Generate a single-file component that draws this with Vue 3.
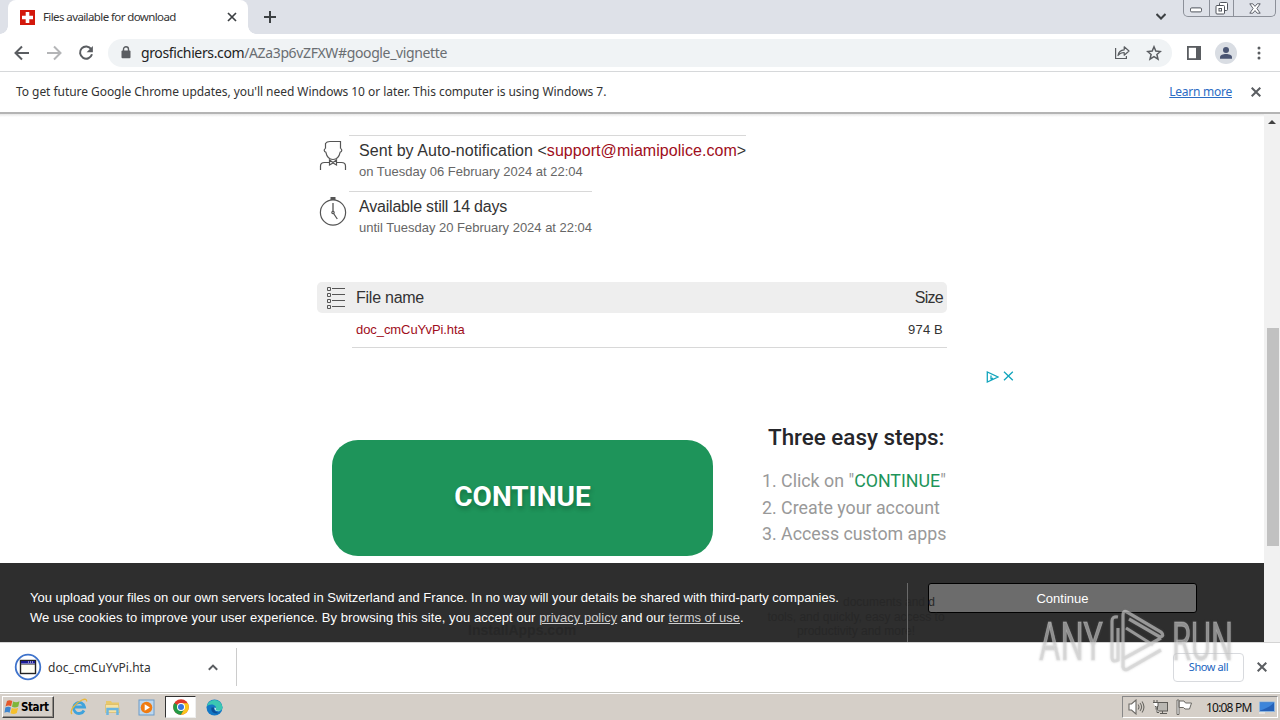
<template>
  <div class="screen">
    <header class="tabstrip">
      <div class="tab">
        <svg class="favicon" width="15" height="15" viewBox="0 0 15 15">
          <rect width="15" height="15" fill="#d3180c" />
          <path d="M7.5 2v11M2 7.5h11" stroke="#fff" stroke-width="3.600" />
        </svg>
        <span class="tab-title">Files available for download</span>
        <svg width="10" height="10" viewBox="0 0 10 10" class="stroke dark thin">
          <path d="M1 1l8 8M9 1l-8 8" />
        </svg>
      </div>
      <svg class="new-tab stroke dark" width="12" height="12" viewBox="0 0 12 12">
        <path d="M6 0v12M0 6h12" />
      </svg>
      <svg class="tab-search stroke dark" width="10" height="7" viewBox="0 0 10 7">
        <path d="M.5 1L5 5.500 9.500 1" />
      </svg>
      <div class="window-controls">
        <span class="wc minimize">
          <svg width="12" height="6" viewBox="0 0 12 6"><rect x="0.5" y="0.9" width="11" height="4" rx="1.2" fill="#fff" stroke="#50545c" /></svg>
        </span>
        <span class="wc restore">
          <svg width="14" height="13" viewBox="0 0 14 13" fill="#fff" stroke="#50545c">
            <rect x="4.5" y="0.5" width="8" height="8" rx="1" />
            <rect x="1" y="3.5" width="8.5" height="8.5" rx="1" />
            <rect x="4" y="6.5" width="2.5" height="2.5" />
          </svg>
        </span>
        <span class="wc quit">
          <svg width="12" height="11" viewBox="0 0 12 11">
            <path d="M.8.8h3L6 3.4 8.200.8h3L7.900 5.500l3.300 4.700h-3L6 7.600l-2.200 2.600h-3l3.300-4.700z" fill="#fff" stroke="#50545c" stroke-width="0.9" />
          </svg>
        </span>
      </div>
    </header>

    <div class="toolbar">
      <svg class="stroke nav" width="16" height="16" viewBox="0 0 16 16"><path d="M15 8H2M8 1.500L1.500 8 8 14.500" /></svg>
      <svg class="stroke nav faded" width="16" height="16" viewBox="0 0 16 16"><path d="M1 8h13M8 1.500L14.500 8 8 14.500" /></svg>
      <svg class="nav" width="16" height="16" viewBox="0 0 16 16">
        <path d="M13.200 4.100A6.100 6.100 0 1 0 14 9.300" fill="none" stroke="#5a5d61" stroke-width="2" />
        <path d="M14.900 1v6.300H8.600z" fill="#5a5d61" />
      </svg>
      <div class="omnibox">
        <svg class="lock" width="10" height="13" viewBox="0 0 10 13">
          <rect x="0.500" y="4.500" width="9" height="7.800" rx="1" fill="#5a5d61" />
          <path d="M2.500 5V3.200a2.500 2.500 0 0 1 5 0V5" fill="none" stroke="#5a5d61" stroke-width="1.400" />
        </svg>
        <span class="url"><span class="domain">grosfichiers.com</span>/AZa3p6vZFXW#google_vignette</span>
        <svg class="share" width="16" height="15" viewBox="0 0 16 15" fill="none" stroke="#5a5d61" stroke-width="1.200">
          <path d="M1.600 3v10.500h10.800v-2.500" />
          <path d="M4 10.500c.6-3.800 2.800-5.500 6.200-5.700V1.800L15 6l-4.800 4.200V7.500C7.500 7.500 5.600 8.300 4 10.500z" stroke-linejoin="round" />
        </svg>
        <svg class="star" width="16" height="16" viewBox="0 0 16 16">
          <path d="M8 1.800l1.800 4.300 4.600.4-3.500 3 1.100 4.600L8 11.700l-4 2.400 1.100-4.600-3.500-3 4.600-.4z" fill="none" stroke="#5a5d61" stroke-width="1.500" />
        </svg>
      </div>
      <svg class="side-panel" width="14" height="14" viewBox="0 0 14 14">
        <rect x="0.900" y="0.900" width="12.200" height="12.200" fill="#fff" stroke="#5a5d61" stroke-width="1.800" />
        <path d="M9 0h5v14H9z" fill="#5a5d61" />
      </svg>
      <svg class="avatar" width="22" height="22" viewBox="0 0 22 22">
        <circle cx="11" cy="11" r="11" fill="#d9dde3" />
        <circle cx="11" cy="8" r="3" fill="#4a5573" />
        <path d="M5 16.800v-1.600c0-2 3-3.200 6-3.200s6 1.200 6 3.200v1.600z" fill="#4a5573" />
      </svg>
      <svg class="kebab" width="4" height="14" viewBox="0 0 4 14" fill="#5a5d61">
        <circle cx="2" cy="2" r="1.500" /><circle cx="2" cy="7" r="1.500" /><circle cx="2" cy="12" r="1.500" />
      </svg>
    </div>

    <div class="infobar">
      <span class="info-text">To get future Google Chrome updates, you'll need Windows 10 or later. This computer is using Windows 7.</span>
      <a class="learn">Learn more</a>
      <svg class="stroke" width="10" height="10" viewBox="0 0 10 10"><path d="M.7.7l8.600 8.600M9.300.7L.7 9.300" /></svg>
    </div>

    <main class="viewport">
      <div class="page">
        <div class="content">
          <section class="detail">
            <svg class="detail-icon" width="28" height="31" viewBox="0 0 28 31" fill="none" stroke="#555" stroke-width="1.200">
              <path d="M6.500 8.500V3.500C7.500 1.800 9 1.500 11 1.500h10.500v7M6.500 8.500c-2 .5-1.500 3.500.3 3.700C7.700 16.500 10.500 19.500 14 19.500s6.300-3 7.200-7.300c1.800-.2 2.300-3.200.3-3.700" />
              <path d="M10.500 20v5l3.500-2 3.500 2v-5L14 22.500zM1.500 30v-4c0-2.500 1.500-3.500 4-3.500h5M26.500 30v-4c0-2.500-1.500-3.500-4-3.500h-5" />
            </svg>
            <div class="detail-body">
              <p class="title sender">Sent by Auto-notification &lt;<a>support@miamipolice.com</a>&gt;</p>
              <p class="sub">on Tuesday 06 February 2024 at 22:04</p>
            </div>
          </section>
          <section class="detail">
            <svg class="detail-icon" width="28" height="31" viewBox="0 0 28 31" fill="none" stroke="#555" stroke-width="1.200">
              <circle cx="14" cy="16.500" r="12.600" />
              <circle cx="14" cy="16.500" r="1.200" />
              <path d="M14 7v8.300M14.600 17.500l3.700 5.500" stroke-width="1.300" />
              <path d="M11.500 2.500h5" stroke-width="3" />
            </svg>
            <div class="detail-body">
              <p class="title days">Available still 14 days</p>
              <p class="sub">until Tuesday 20 February 2024 at 22:04</p>
            </div>
          </section>

          <div class="files">
            <div class="files-head">
              <svg width="18" height="23" viewBox="0 0 18 23" fill="none" stroke="#555">
                <path v-for="y in rows" :key="y" :d="`M.5 ${y}h3v3h-3zM5 ${y + 1}h13`" />
              </svg>
              <span class="name">File name</span>
              <span class="size">Size</span>
            </div>
            <div class="files-row">
              <a class="file-link">doc_cmCuYvPi.hta</a>
              <span class="file-size">974 B</span>
            </div>
          </div>
        </div>

        <div class="ad">
          <div class="ad-choices">
            <svg width="13" height="12" viewBox="0 0 13 12" fill="none" stroke="#12a5bd" stroke-width="1.300">
              <path d="M1.300 1v10L12 6zM5 4.500v4M5 8l2-1" />
            </svg>
            <svg width="11" height="10" viewBox="0 0 11 10" stroke="#12a5bd" stroke-width="1.300"><path d="M1 .7l8.800 8.600M9.800.7L1 9.300" /></svg>
          </div>
          <div class="ad-body">
            <div class="ad-button"><span>CONTINUE</span></div>
            <div class="steps">
              <h3>Three easy steps:</h3>
              <p>1. Click on "<b>CONTINUE</b>"</p>
              <p>2. Create your account</p>
              <p>3. Access custom apps</p>
            </div>
          </div>
        </div>

        <div class="cookies">
          <span class="ghost brand">InstallApps.com</span>
          <span class="ghost blurb"><i>documents and d</i><br />tools, and quickly, easy access to<br />productivity and more!</span>
          <div class="cookie-text">
            <p>You upload your files on our own servers located in Switzerland and France. In no way will your details be shared with third-party companies.</p>
            <p><span class="consent">We use cookies to improve your user experience. By browsing this site, you accept our </span><u>privacy policy</u> and our <u>terms of use</u>.</p>
          </div>
          <div class="cookie-action">
            <button>Continue</button>
          </div>
        </div>
      </div>
      <div class="scrollbar">
        <svg width="8" height="4" viewBox="0 0 8 4"><path d="M4 0l4 4H0z" fill="#404040" /></svg>
        <div class="thumb"></div>
      </div>
    </main>

    <div class="downloads">
      <svg class="file-icon" width="28" height="28" viewBox="0 0 28 28">
        <circle cx="14" cy="14" r="12.300" fill="#fff" stroke="#3f73cb" stroke-width="1.800" />
        <rect x="6.500" y="7.500" width="15" height="13" fill="#fffef5" stroke="#222" stroke-width="1.400" />
        <path d="M7 9.300h14" stroke="#1c1c96" stroke-width="2.600" />
        <path d="M14 9h6" stroke="#fff" stroke-dasharray="1 1" />
        <path d="M7 11.500h14" stroke="#555" stroke-width="0.700" />
      </svg>
      <span class="dl-name">doc_cmCuYvPi.hta</span>
      <svg class="stroke" width="10" height="7" viewBox="0 0 10 7"><path d="M.8 5.800L5 1.600l4.200 4.200" /></svg>
      <div class="dl-sep"></div>
      <button class="show-all">Show all</button>
      <svg class="stroke dl-close" width="10" height="10" viewBox="0 0 10 10"><path d="M.7.7l8.600 8.600M9.300.7L.7 9.300" /></svg>
    </div>

    <footer class="taskbar">
      <div class="start">
        <svg width="17" height="16" viewBox="0 0 16 16">
          <path d="M2.500 2C4 .8 6 .9 7.800 2L6.600 7.300C5 6.300 3 6.300 1 7.400z" fill="#e5592b" />
          <path d="M8.600 2.500c2 1 4.200 1 6.400-.3L13.800 7.500c-2 1.100-4.400 1.200-6.300.2z" fill="#7eb63a" />
          <path d="M.8 8.500c2-1.100 4-1.100 5.600-.1l-1.300 5.400c-1.500-1-3.500-1-5.100 0z" fill="#3f86cf" />
          <path d="M7.300 8.900c2 1 4.300.8 6.300-.2l-1.300 5.300c-2 1.200-4.200 1.300-6.300.2z" fill="#f6c02c" />
        </svg>
        <span>Start</span>
      </div>
      <span class="task ie">
        <svg width="18" height="18" viewBox="0 0 18 18" fill="none">
          <path d="M14 12.500A5.500 5.500 0 1 1 14.500 9H5" stroke="#3fa3dc" stroke-width="2.800" />
          <path d="M2 16C-1 13 5 5 12 2c3-1.300 5-1 4.500 1.500" stroke="#e9b73a" stroke-width="1.300" />
        </svg>
      </span>
      <span class="task folder">
        <svg width="17" height="17" viewBox="0 0 17 17">
          <path d="M2 2h5l1 1.500h7V13H2z" fill="#e8c86a" />
          <path d="M1.500 5.500h13l1 8h-14z" fill="#f7e2a0" stroke="#d4b45c" stroke-width="0.600" />
          <path d="M3.500 16v-6h10v6" fill="none" stroke="#69b5e0" stroke-width="2.500" />
        </svg>
      </span>
      <span class="task media">
        <svg width="17" height="17" viewBox="0 0 17 17">
          <rect x="1" y="1" width="15" height="15" fill="#bcd7ef" stroke="#6d9bc7" />
          <circle cx="8.500" cy="8.500" r="5.800" fill="#ef7b12" />
          <path d="M6.700 5.200v6.600l5.200-3.300z" fill="#fff" />
        </svg>
      </span>
      <span class="task chrome active">
        <svg width="16" height="16" viewBox="0 0 16 16">
          <circle cx="8" cy="8" r="7.800" fill="#e0392b" />
          <path d="M8 8L1.250 4.100A7.800 7.800 0 0 0 8 15.800l3.400-5.800z" fill="#249a46" />
          <path d="M8 8V4.300h6.900A7.800 7.800 0 0 1 8 15.800l3.400-5.800z" fill="#fbc51b" />
          <circle cx="8" cy="8" r="4" fill="#fff" /><circle cx="8" cy="8" r="3" fill="#3875df" />
        </svg>
      </span>
      <span class="task edge">
        <svg width="17" height="17" viewBox="0 0 17 17">
          <circle cx="8.500" cy="8.500" r="8" fill="#1377c5" />
          <path d="M.6 8A8 8 0 0 1 16.500 8c.2 2.800-2 4-4.500 4-2 0-2.800-.8-2.200-1.700C11 8 8.500 5.500 5.500 5.600 3 5.700 1 7 .6 8z" fill="#3bc7b2" />
          <path d="M5.500 8.500c-1 4.500 3 7.300 8.500 5.200-3.500.5-6.500-2-5.500-5.200z" fill="#0c4e97" />
          <path d="M8.500 8.600c-.8 2.500 2.500 4.800 7 2.800-2.500.8-6.500 0-5.700-1.200.4-.8.200-1.500-1.300-1.600z" fill="#d6ecef" />
        </svg>
      </span>
      <div class="tray">
        <svg width="17" height="16" viewBox="0 0 17 16" fill="none" stroke="#6b6964" stroke-width="1.100">
          <path d="M1 5h2.500L8 1v14l-4.500-4H1z" fill="#fff" />
          <path d="M10 5.500c1.200 1.500 1.200 3.500 0 5M12 4c2 2.500 2 5.500 0 8M14 2.500c2.500 3.500 2.500 7.500 0 11" />
        </svg>
        <svg width="17" height="16" viewBox="0 0 17 16" stroke="#5d5b57">
          <rect x="5.500" y="3.500" width="10" height="8.500" fill="#b9b7b2" /><path d="M8 14.500h7M10.500 12v2" />
          <path d="M1 3.500h5v4H5v6h2M2 1v3M5 1v3M3 7.500h1v3" fill="#fff" />
        </svg>
        <svg width="17" height="16" viewBox="0 0 17 16" stroke="#6b6964" fill="#fff">
          <path d="M1 1h2v14.500H1zM3 2h5l1.500 2h6l-2 6H9L7.500 8.500H3z" />
        </svg>
        <span class="clock">10:08 PM</span>
        <svg width="16" height="13" viewBox="0 0 16 13">
          <path d="M.5 1h15v9.500H.5z" fill="#2561b8" stroke="#8db5de" />
          <path d="M1 9.500C6 8 12 5 15 1.500H1z" fill="#3d85da" /><path d="M0 12h6" stroke="#f6f6f6" />
        </svg>
      </div>
    </footer>

    <svg class="watermark" width="200" height="70" viewBox="0 0 200 70">
      <g class="mark">
        <text x="2" y="54" textLength="64" lengthAdjust="spacingAndGlyphs">ANY</text>
        <text x="135" y="54" textLength="61" lengthAdjust="spacingAndGlyphs">RUN</text>
        <path d="M81 11q-6-1-6 4v36q0 6 6 3V22" />
        <path d="M86 53V9q0-5 4-3l34 20q4 4-1 5L92 13M86 53l38-21M89 22l27 17M86 53v8q1 4 5 2l33-19" />
      </g>
    </svg>
  </div>
</template>

<script setup>
const rows = [1.5, 7.5, 13.5, 19.5]
</script>

<style>
body {
  margin: 0;
  overflow: hidden;
}
</style>

<style scoped>
.screen {
  position: relative;
  width: 1280px;
  height: 720px;
  display: flex;
  flex-direction: column;
  background: #fff;
  font-family: "Noto Sans", "DejaVu Sans", sans-serif;
  font-size: 12px;
  color: #333;
  white-space: nowrap;
  overflow: hidden;
}

.screen * {
  box-sizing: border-box;
}

svg {
  display: block;
  flex: none;
}

p, h3 {
  margin: 0;
}

.stroke {
  fill: none;
  stroke: #5a5d61;
  stroke-width: 2;
}

.stroke.dark {
  stroke: #3c4043;
}

.stroke.thin {
  stroke-width: 1.700;
}

/* tabs */
.tabstrip {
  height: 34px;
  flex: none;
  display: flex;
  background: #dee1e8;
  padding-left: 8px;
}

.tab {
  position: relative;
  width: 240px;
  height: 34px;
  background: #fff;
  border-radius: 8px 8px 0 0;
  display: flex;
  align-items: center;
  padding: 0 11px 0 12px;
}

.tab::before,
.tab::after {
  content: "";
  position: absolute;
  bottom: 0;
  left: -8px;
  width: 8px;
  height: 8px;
  background: radial-gradient(circle at 0 0, transparent 7.5px, #fff 8px);
}

.tab::after {
  left: 240px;
  background: radial-gradient(circle at 100% 0, transparent 7.5px, #fff 8px);
}

.tab-title {
  flex: 1;
  margin-left: 8px;
  padding-bottom: 1px;
  font-size: 11.5px;
  letter-spacing: -0.6px;
}

.new-tab {
  margin: 11px auto 0 16px;
}

.tab-search {
  margin: 13px 17px 0 0;
}

.window-controls {
  display: flex;
  width: 93px;
  height: 17px;
  margin-right: 4px;
  border: 1px solid #8c9099;
  border-top: 0;
  border-radius: 0 0 5px 5px;
}

.wc {
  display: flex;
  align-items: center;
  justify-content: center;
  width: 25px;
}

.wc + .wc {
  border-left: 1px solid #8c9099;
}

.minimize {
  padding-top: 4px;
}

.quit {
  width: 42px;
}

/* toolbar */
.toolbar {
  height: 38px;
  flex: none;
  display: flex;
  align-items: center;
  border-bottom: 1px solid #d6d8da;
  padding-left: 14px;
}

.nav {
  margin-right: 16px;
}

.faded {
  opacity: 0.45;
}

.omnibox {
  width: 1064px;
  height: 28px;
  margin-left: -2px;
  border-radius: 14px;
  background: #f0f3f5;
  display: flex;
  align-items: center;
  padding: 0 10px 0 13px;
}

.url {
  flex: 1;
  margin-left: 10px;
  font-size: 14px;
  letter-spacing: -0.37px;
  color: #6a6e72;
}

.domain {
  color: #222;
}

.share {
  margin-right: 16px;
}

.side-panel {
  margin-left: 15px;
}

.avatar {
  margin-left: 14px;
}

.kebab {
  margin-left: 20px;
}

/* notice */
.infobar {
  height: 40px;
  flex: none;
  display: flex;
  align-items: center;
  padding: 0 19px 0 16px;
}

.info-text {
  flex: 1;
  padding-bottom: 1px;
  letter-spacing: -0.05px;
}

.learn {
  margin-right: 19px;
  padding-bottom: 2px;
  color: #2b6cc4;
  text-decoration: underline;
  letter-spacing: -0.25px;
}

/* page */
.viewport {
  height: 531px;
  flex: none;
  display: flex;
  border-top: 2px solid #b4b4b4;
  border-bottom: 1px solid #d4d4d4;
  font-family: "Liberation Sans", Arial, sans-serif;
}

.page {
  position: relative;
  width: 1264px;
  overflow: hidden;
  background: linear-gradient(#e6e6e6, #fff 3px);
}

.content {
  width: 630px;
  margin: 21px auto 0;
}

.detail {
  display: flex;
  height: 56px;
}

.detail-icon {
  margin: 5px 2px 0;
}

.detail-body {
  border-top: 1px solid #d8d8d8;
  padding-left: 10px;
  align-self: flex-start;
}

.title {
  font-size: 16px;
  line-height: 20px;
  padding-top: 5px;
  color: #333;
}

.sender {
  letter-spacing: 0.055px;
}

.days {
  letter-spacing: -0.2px;
}

.title a,
.file-link {
  color: #a00d20;
}

.sub {
  font-size: 13px;
  line-height: 20px;
  padding-top: 1px;
  color: #666;
  letter-spacing: -0.01px;
}

.files {
  margin-top: 35px;
}

.files-head {
  height: 31px;
  display: flex;
  align-items: center;
  padding: 0 4px 0 10px;
  background: #eee;
  border-radius: 5px;
  font-size: 16px;
}

.name {
  flex: 1;
  margin-left: 11px;
  letter-spacing: -0.25px;
}

.size {
  letter-spacing: -0.7px;
}

.files-row {
  display: flex;
  justify-content: space-between;
  align-items: center;
  height: 35px;
  margin-left: 35px;
  padding: 0 4px 2px;
  border-bottom: 1px solid #d8d8d8;
  font-size: 13px;
}

.file-link {
  letter-spacing: -0.07px;
}

.file-size {
  letter-spacing: 0.2px;
}

.ad {
  width: 764px;
  margin: 23px auto 0;
  font-family: Roboto, sans-serif;
}

.ad-choices {
  display: flex;
  justify-content: flex-end;
  gap: 4px;
}

.ad-body {
  display: flex;
  align-items: flex-start;
  padding-left: 82px;
}

.ad-button {
  display: flex;
  align-items: center;
  justify-content: center;
  width: 381px;
  height: 115.500px;
  margin-top: 57px;
  padding-bottom: 2px;
  border-radius: 26px;
  background: #1e945a;
  color: #fff;
  font-size: 28px;
  font-weight: 700;
  text-shadow: 1px 3px 4px rgba(0, 40, 20, 0.3);
}

.steps {
  margin: 40px 0 0 49px;
  font-size: 17.800px;
  line-height: 26.700px;
  color: #999;
}

.steps h3 {
  margin: 0 0 17px 6px;
  font-size: 22.400px;
  font-weight: 500;
  line-height: 28px;
  color: #26262a;
}

.steps b {
  font-weight: 400;
  color: #1e945a;
}

.cookies {
  position: absolute;
  left: 0;
  right: 0;
  bottom: 0;
  height: 79px;
  display: flex;
  background: #2e2e2e;
  color: #fff;
  font-size: 13px;
}

.cookie-text {
  position: relative;
  width: 908px;
  margin-top: 20px;
  padding: 5px 0 0 30px;
  line-height: 20px;
  border-right: 1px solid #6a6a6a;
}

.consent {
  letter-spacing: 0.075px;
}

.cookie-text u {
  color: #d0d0d0;
}

.cookie-action button {
  width: 269px;
  height: 30px;
  margin: 20px 0 0 20px;
  border: 1px solid #000;
  border-radius: 3px;
  background: #6c6c6c;
  color: #fff;
  font: inherit;
}

/* ad text showing through the banner */
.ghost {
  position: absolute;
  color: #272727;
}

.brand {
  left: 468px;
  top: 59px;
  font-size: 14px;
  font-weight: 700;
}

.blurb {
  left: 756px;
  top: 32px;
  width: 200px;
  line-height: 14.500px;
  font-size: 12px;
  text-align: center;
}

.blurb i {
  padding-left: 66px;
  font-style: normal;
}

.scrollbar {
  width: 16px;
  background: #f1f1f1;
  display: flex;
  flex-direction: column;
  align-items: center;
  padding-top: 6px;
}

.thumb {
  width: 12px;
  height: 218px;
  margin-top: 204px;
  margin-left: 1px;
  background: #c1c1c1;
}

/* downloads */
.downloads {
  height: 49px;
  flex: none;
  display: flex;
  align-items: center;
  padding: 0 13px 1px 14px;
}

.dl-name {
  width: 160px;
  margin-left: 6px;
}

.dl-sep {
  width: 1px;
  height: 38px;
  margin-left: 18px;
  background: #ccc;
}

.show-all {
  width: 71px;
  height: 29px;
  margin-left: auto;
  border: 1px solid #d8dade;
  border-radius: 4px;
  background: #fff;
  padding: 0 0 2px;
  color: #2265c0;
  font: inherit;
  font-size: 11px;
  letter-spacing: -0.4px;
}

.dl-close {
  margin-left: 13px;
}

/* taskbar */
.taskbar {
  height: 28px;
  flex: none;
  display: flex;
  align-items: center;
  background: #d5cfc8;
  border-top: 1px solid #c6c6c0;
  box-shadow: inset 0 1px #fff;
  padding: 1px 2px 0 2px;
}

.start {
  display: flex;
  align-items: center;
  width: 52px;
  height: 22px;
  padding-left: 1px;
  border: 1px solid;
  border-color: #fff #444 #444 #fff;
  box-shadow: inset -1px -1px #918c85;
  font-family: "DejaVu Sans Condensed", "DejaVu Sans", sans-serif;
  font-stretch: condensed;
  font-size: 11.500px;
  font-weight: 700;
  color: #000;
}

.start span {
  letter-spacing: -0.4px;
}

.task {
  width: 31px;
  height: 22px;
  margin-right: 3px;
  display: flex;
  align-items: center;
  justify-content: center;
}

.ie {
  margin-left: 9px;
}

.active {
  background: #fff;
  border: 1px solid;
  border-color: #333 #eee #eee #333;
}

.tray {
  display: flex;
  align-items: center;
  gap: 7px;
  margin-left: auto;
  width: 156px;
  height: 22px;
  padding-left: 5px;
  border: 1px solid;
  border-color: #888 #fff #fff #888;
}

.clock {
  width: 46px;
  margin: 0 0 0 6px;
  color: #111;
  letter-spacing: -0.8px;
}

.watermark {
  position: absolute;
  left: 1037px;
  top: 606px;
  filter: drop-shadow(0 0 1px rgba(130, 130, 130, 0.5));
}

.mark {
  fill: rgba(205, 205, 205, 0.55);
  stroke: rgba(225, 225, 225, 0.35);
  font-family: Roboto, sans-serif;
  font-size: 53px;
}

.mark path {
  fill: none;
  stroke: rgba(210, 210, 210, 0.6);
  stroke-width: 3.200;
}
</style>
